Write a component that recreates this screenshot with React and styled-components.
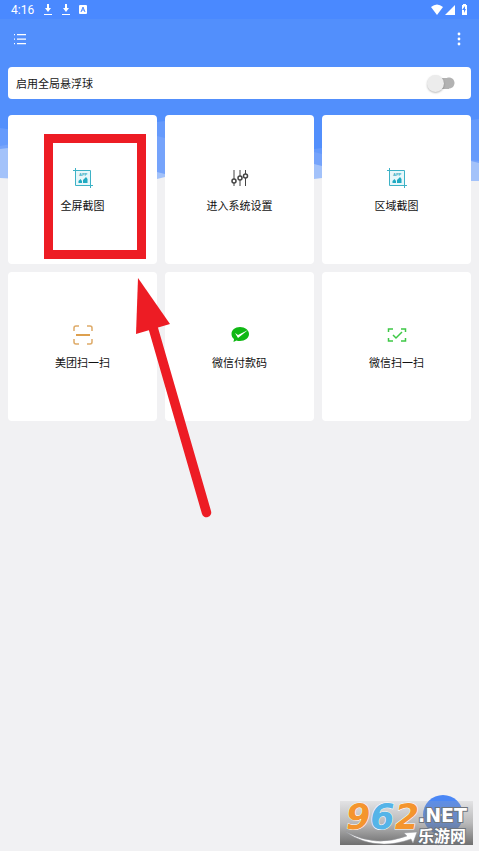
import React from "react";
import styled, { createGlobalStyle } from "styled-components";

const Global = createGlobalStyle`
  * { box-sizing: border-box; }
  body { margin: 0; background: #f1f1f3; font-family: Roboto, "Noto Sans CJK SC", sans-serif; }
  button { font: inherit; color: inherit; border: 0; padding: 0; background: none; cursor: pointer; }
`;

const Page = styled.div`
  position: relative;
  min-height: 100vh;
  overflow: hidden;
`;

const Backdrop = styled.svg`
  position: absolute;
  top: 0;
  left: 0;
  width: 100%;
  height: 184px;
`;

const Screen = styled.div`
  position: relative;
`;

const StatusBar = styled.div`
  display: flex;
  align-items: center;
  justify-content: space-between;
  height: 19px;
  padding: 0 10px 0 11px;
  background: #4a89ff;
  color: #fff;
  font-size: 12px;
  line-height: 20px;
`;

const StatusGroup = styled.div`
  display: flex;
  align-items: center;
  gap: ${(p) => p.$gap}px;
`;

const Time = styled.span`
  width: 24px;
  white-space: nowrap;
`;

const Toolbar = styled.header`
  display: flex;
  align-items: center;
  justify-content: space-between;
  height: 40px;
  padding: 0 12px;
`;

const IconButton = styled.button`
  display: flex;
  width: 16px;
  height: 16px;
`;

const Content = styled.main`
  display: flex;
  flex-direction: column;
  gap: 16px;
  padding: 8px;
`;

const ToggleRow = styled.label`
  display: flex;
  align-items: center;
  justify-content: space-between;
  height: 32px;
  padding: 0 16px 0 8px;
  border-radius: 4px;
  background: #fff;
  color: #151515;
  font-size: 11px;
`;

const Switch = styled.input`
  appearance: none;
  display: flex;
  align-items: center;
  width: 28px;
  height: 18px;
  margin: 0;
  border-radius: 9px;
  cursor: pointer;
  background:
    radial-gradient(circle at 22px 9px, #b2b2b2 5px, transparent 6px),
    linear-gradient(#b2b2b2, #b2b2b2) 8px center / 14px 11px no-repeat;
  &::before {
    content: "";
    width: 17px;
    height: 17px;
    border-radius: 50%;
    background: #ececec;
    box-shadow: 0 1px 2px #0004;
  }
  &:checked { justify-content: flex-end; }
`;

const Grid = styled.div`
  display: grid;
  grid-template-columns: repeat(3, 1fr);
  gap: 8px;
`;

const Tile = styled.button`
  && {
    display: flex;
    flex-direction: column;
    align-items: center;
    justify-content: center;
    gap: 10px;
    padding-top: 2px;
    aspect-ratio: 1;
    border-radius: 4px;
    background: #fff;
    color: #111;
    font-size: 11px;
    line-height: 16px;
  }
`;

const Annotation = styled.svg`
  position: absolute;
  top: 134px;
  left: 44px;
  width: 170px;
  height: 390px;
  pointer-events: none;
`;

const Fab = styled.button`
  && {
    position: absolute;
    right: 16px;
    bottom: 16px;
    display: grid;
    place-items: center;
    width: 40px;
    height: 40px;
    border-radius: 50%;
    background: #4b87f5;
  }
`;

const Watermark = styled.div`
  position: absolute;
  right: 6px;
  bottom: 6px;
  display: flex;
  width: 133px;
  height: 44px;
  padding-left: 6px;
  background: linear-gradient(#aaaaaa33, #88888888 50%, #666666ee);
  pointer-events: none;
`;

const Digits = styled.div`
  width: 72px;
  font: italic bold 35px/32px "DejaVu Sans", sans-serif;
  white-space: nowrap;
  -webkit-text-stroke: 1px #fff;
  paint-order: stroke fill;
`;

const Digit = styled.span`
  color: ${(p) => p.$color};
`;

const Site = styled.div`
  display: flex;
  flex-direction: column;
  padding-top: 5px;
  color: #fff;
  -webkit-text-stroke: 2px #70757c;
  paint-order: stroke fill;
  white-space: nowrap;
`;

const Domain = styled.span`
  font: bold 19px/19px "DejaVu Sans", sans-serif;
`;

const SiteName = styled.span`
  font: bold 16px/20px "Noto Sans CJK SC", sans-serif;
`;

const Swoosh = styled.svg`
  position: absolute;
  left: 6px;
  top: 28px;
  width: 72px;
  height: 16px;
`;

function Waves() {
  return (
    <Backdrop viewBox="0 0 479 184" preserveAspectRatio="none" aria-hidden="true">
      <path fill="#a3c2fa" d="M0 0H479V181H471C420 178 350 176 322 178L314 179C260 186 200 182 165 177L157 179C100 186 40 180 0 178Z" />
      <path fill="#75a3fb" d="M0 0H479V163L471 161C430 150 360 168 322 166L314 164C260 150 200 170 165 174L157 172C110 162 50 141 0 149Z" />
      <path fill="#659afc" d="M0 0H479V161L471 160C420 144 370 144 322 154L314 152C260 137 210 128 165 138L157 136C110 128 50 136 0 146Z" />
      <path fill="#528ffc" d="M0 0H479V119L471 120C420 128 370 140 322 148L314 149C270 148 210 117 165 121L157 122C110 132 50 136 0 128Z" />
    </Backdrop>
  );
}

function DownloadMark() {
  return (
    <svg width="10" height="12" viewBox="0 0 10 12" fill="#fff" aria-hidden="true">
      <path d="M4 0h2v4h2L5 8 2 4h2zM1 10h8v1H1z" />
    </svg>
  );
}

function CropImage() {
  return (
    <svg width="22" height="22" viewBox="0 0 22 22" fill="none" aria-hidden="true">
      <path fill="#e8f7fa" d="M4 4h14v14H4z" />
      <path stroke="#3db2c6" d="M3.500 1v17.500H21M1 3.500H18.500V21" />
      <path fill="#20aac2" d="M6.500 16v-2l2-2 1.500 2v2zM11 16v-3l3-3 1.500 2v4z" />
      <text x="7" y="9" fill="#39adc2" fontSize="4" fontFamily="Liberation Sans" fontWeight="bold">APP</text>
    </svg>
  );
}

function Sliders() {
  return (
    <svg width="22" height="22" viewBox="0 0 22 22" fill="none" stroke="#444" aria-hidden="true">
      <path d="M5 3v9M5 16v3M11 3v6M11 13v6M16.500 3v4M16.500 11v8" />
      <g strokeWidth="1.500">
        <circle cx="5" cy="14" r="2" />
        <circle cx="11" cy="11" r="2" />
        <circle cx="16.500" cy="9" r="2" />
      </g>
    </svg>
  );
}

function ScanLine() {
  return (
    <svg width="22" height="22" viewBox="0 0 22 22" fill="none" aria-hidden="true">
      <path stroke="#deaa68" strokeWidth="1.500" d="M2 7V4q0-2 2-2h3M15 2h3q2 0 2 2v3M20 15v3q0 2-2 2h-3M7 20H4q-2 0-2-2v-3" />
      <path stroke="#dda04f" strokeWidth="2" d="M4 11h14" />
    </svg>
  );
}

function PayBubble() {
  return (
    <svg width="22" height="22" viewBox="0 0 22 22" fill="none" aria-hidden="true">
      <path fill="#10b814" d="M11 3C6 3 2.500 6 2.500 10c0 2 1 4 2.500 5l-.5 3 3-1.500c1 .5 2 .5 3.500.5 5 0 9-3 9-7s-4-7-9-7z" />
      <path fill="#fff" d="m6 9 3 2 10-5-10 8z" />
    </svg>
  );
}

function ScanCheck() {
  return (
    <svg width="22" height="22" viewBox="0 0 22 22" fill="none" stroke="#3ec846" aria-hidden="true">
      <path strokeWidth="1.500" d="M2.500 8V5H7M15 5h4.500v3M19.500 14v3H15M7 17H2.500v-3" />
      <path strokeWidth="1.500" d="m7 11 3 3 6-6" />
    </svg>
  );
}

const tiles = [
  ["全屏截图", CropImage],
  ["进入系统设置", Sliders],
  ["区域截图", CropImage],
  ["美团扫一扫", ScanLine],
  ["微信付款码", PayBubble],
  ["微信扫一扫", ScanCheck],
];

export default function App() {
  return (
    <Page>
      <Global />
      <Waves />
      <Screen>
        <StatusBar>
          <StatusGroup $gap={8}>
            <Time>4:16</Time>
            <DownloadMark />
            <DownloadMark />
            <svg width="8" height="9" viewBox="0 0 8 9" aria-hidden="true">
              <rect width="8" height="9" rx="1" fill="#fff" />
              <path d="m2 7 2-5 2 5M3 5h2" fill="none" stroke="#4a89ff" />
            </svg>
          </StatusGroup>
          <StatusGroup $gap={2}>
            <svg width="12" height="11" viewBox="0 0 12 11" aria-hidden="true">
              <path fill="#fff" d="M0 3q6-5 12 0L6 11z" />
            </svg>
            <svg width="10" height="10" viewBox="0 0 10 10" aria-hidden="true">
              <path fill="#fff" d="M10 0v10H0z" />
            </svg>
            <svg width="12" height="11" viewBox="0 0 12 11" aria-hidden="true">
              <path fill="#fff" d="M5 1h1V0h3v1h1v10H5z" />
              <path fill="#4a89ff" d="M8 2 5 6h2v3l2-4H8z" />
            </svg>
          </StatusGroup>
        </StatusBar>
        <Toolbar>
          <IconButton aria-label="菜单">
            <svg width="16" height="16" viewBox="0 0 16 16" aria-hidden="true">
              <path fill="#fff" d="M2 3h1v1.300H2zM5 3h9v1.300H5zM2 7.500h1v1.300H2zM5 7.500h9v1.300H5zM2 12h1v1.300H2zM5 12h9v1.300H5z" />
            </svg>
          </IconButton>
          <IconButton aria-label="更多">
            <svg width="16" height="16" viewBox="0 0 16 16" fill="#fff" aria-hidden="true">
              <circle cx="8" cy="3" r="1.400" />
              <circle cx="8" cy="8" r="1.400" />
              <circle cx="8" cy="13" r="1.400" />
            </svg>
          </IconButton>
        </Toolbar>
        <Content>
          <ToggleRow>
            启用全局悬浮球
            <Switch type="checkbox" role="switch" />
          </ToggleRow>
          <Grid>
            {tiles.map(([label, Icon]) => (
              <Tile key={label}>
                <Icon />
                <span>{label}</span>
              </Tile>
            ))}
          </Grid>
        </Content>
      </Screen>
      <Annotation viewBox="0 0 170 390" fill="none" aria-hidden="true">
        <path stroke="#ed1c24" strokeWidth="9" d="M4.500 4.500h93v116h-93z" />
        <path stroke="#ed1c24" strokeWidth="9.500" strokeLinecap="round" d="m108 190 54.500 188.500" />
        <path fill="#ed1c24" d="M94 144 126 190 92 200z" />
      </Annotation>
      <Fab aria-label="添加">
        <svg width="14" height="14" viewBox="0 0 14 14" stroke="#fff" strokeWidth="2" aria-hidden="true">
          <path d="M7 1v12M1 7h12" />
        </svg>
      </Fab>
      <Watermark>
        <Digits>
          <Digit $color="#f4952e">9</Digit>
          <Digit $color="#55b4e8">6</Digit>
          <Digit $color="#f4952e">2</Digit>
        </Digits>
        <Site>
          <Domain>.NET</Domain>
          <SiteName>乐游网</SiteName>
        </Site>
        <Swoosh viewBox="0 0 72 16" aria-hidden="true">
          <path fill="#fff" stroke="#9a9da2" strokeWidth=".5" d="M0 3Q30 19 61 7L58 4 71 3 67 14 65 10Q29 23 0 3Z" />
        </Swoosh>
      </Watermark>
    </Page>
  );
}
